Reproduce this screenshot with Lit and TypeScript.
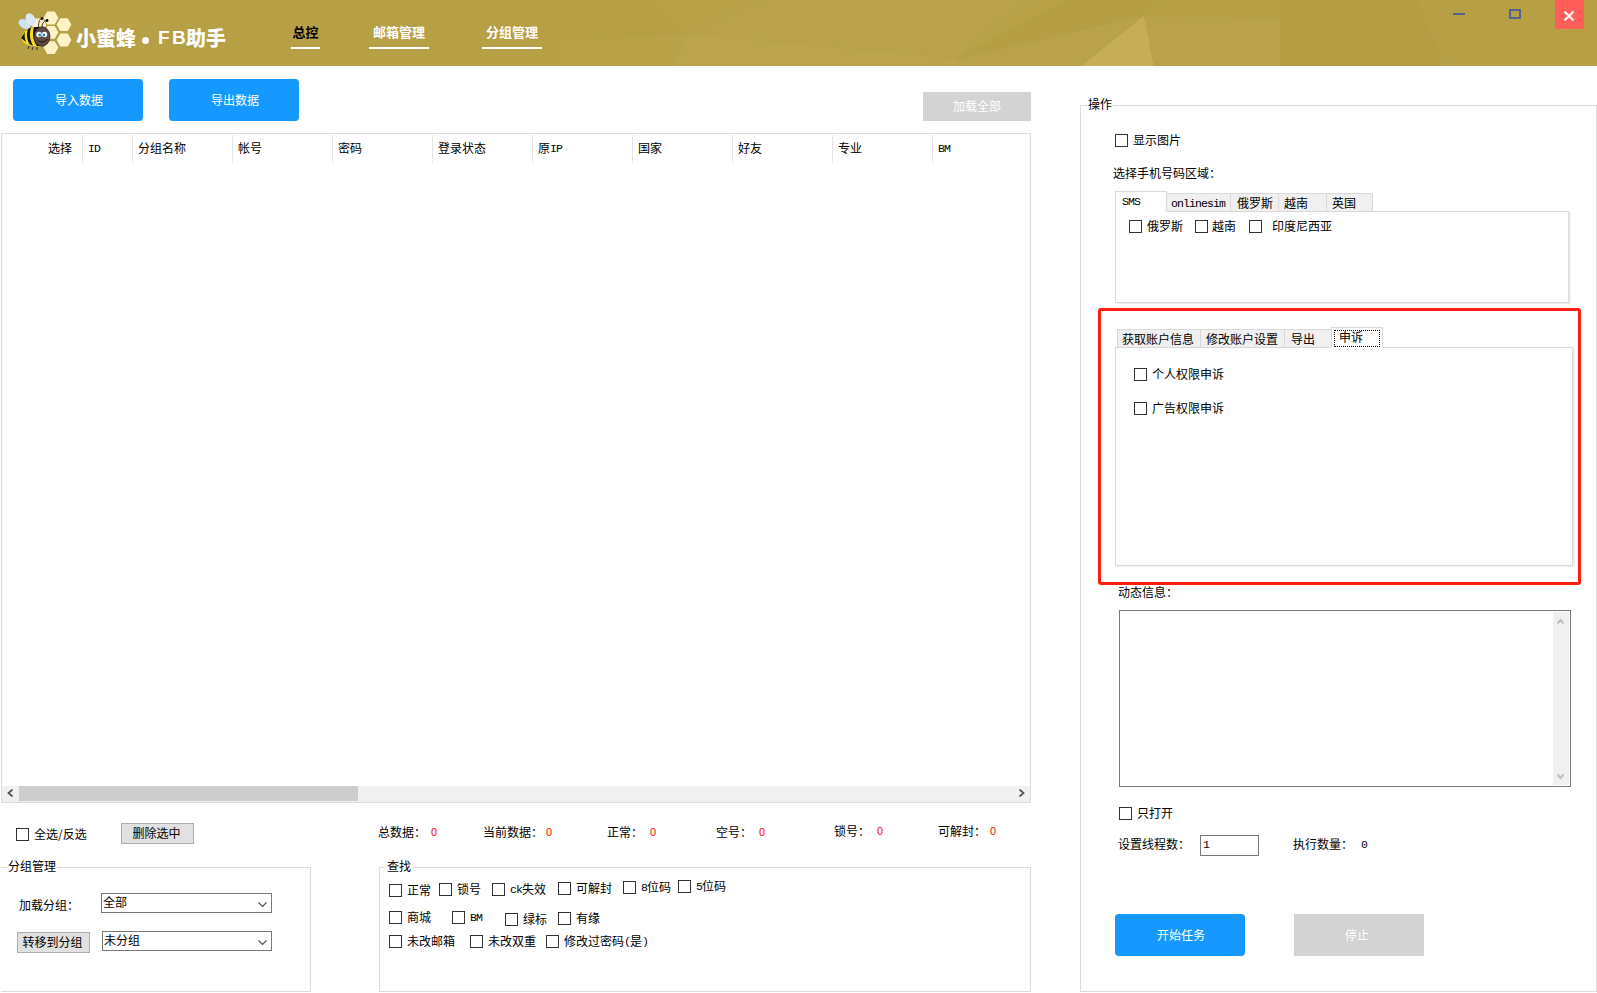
import { LitElement, html, css, svg } from "lit";
import { customElement } from "lit/decorators.js";

const lat = (t: string) => html`<span class="lat">${t}</span>`;

const check = (label: unknown, cls = "") =>
  html`<label class="check ${cls}"><i class="box"></i><span>${label}</span></label>`;

const stat = (label: string, cls: string) =>
  html`<div class="stat ${cls}"><span class="cap">${label}</span><span class="num">0</span></div>`;

const chevron = (d: string, w: number, h: number, cls: string) =>
  html`<svg class=${cls} width=${w} height=${h} viewBox="0 0 ${w} ${h}"><path d=${d} /></svg>`;

const hex = (cx: number, cy: number) =>
  svg`<path d="M${cx - 7.4} ${cy}l3.700-6.400h7.400l3.700 6.400-3.700 6.400h-7.400z" />`;

@customElement("app-root")
export class AppRoot extends LitElement {
  static styles = css`
    :host {
      display: flex;
      flex-direction: column;
      width: 1597px;
      height: 993px;
      overflow: hidden;
      background: #fff;
      color: #000;
      font: 12px/12px "Noto Sans CJK SC", sans-serif;
    }
    * { box-sizing: border-box; }
    span, div, label { white-space: nowrap; }
    svg { display: block; }
    .lat { display: inline-block; font: 11.5px/12px "Liberation Mono", monospace; letter-spacing: -0.9px; transform: translateY(-1px); }

    header {
      position: relative;
      display: flex;
      height: 66px;
      flex: none;
      background: #b69f45;
      color: #fff;
    }
    .facets { position: absolute; inset: 0; }
    .brand { position: relative; display: flex; width: 291px; padding: 10px 0 0 18px; }
    .name {
      margin: 18px 0 0 2px;
      font: 900 20px/20px "Noto Sans CJK SC", sans-serif;
      display: flex;
    }
    .name .dot { width: 7px; height: 7px; border-radius: 4px; background: #fff; margin: 9px 9px 0 6px; }
    .name .en { width: 28px; font: bold 19px/20px "Liberation Sans", sans-serif; letter-spacing: 2.5px; }
    nav { position: relative; display: flex; flex: 1; padding-top: 25px; font-size: 13px; line-height: 14px; font-weight: 600; }
    nav a { height: 24px; text-align: center; border-bottom: 2px solid #fff; }
    .n1 { width: 29px; color: #000; margin-right: 49px; }
    .n2 { width: 60px; margin-right: 53px; }
    .n3 { width: 60px; }
    .win { position: relative; display: flex; width: 144px; }
    .min { width: 12px; height: 2px; margin: 13px 44px 0 0; background: #53648c; }
    .max { width: 12px; height: 10px; margin: 9px 34px 0 0; border: 2px solid #53648c; }
    .close { width: 29px; height: 29px; background: #ff5f58; border-radius: 0 0 2px 2px; padding: 11px 0 0 9px; }
    .close path { stroke: #fff; stroke-width: 2; fill: none; }

    main { display: grid; grid-template-columns: 1080px 517px; height: 927px; }
    .left { display: flex; flex-direction: column; padding-left: 1px; }
    .tools { display: flex; height: 67px; padding: 13px 0 0 12px; }
    .btn {
      display: flex; align-items: center; justify-content: center;
      width: 130px; height: 42px; color: #fff; background: #1699ff; border-radius: 4px;
      padding: 0 0 1px 2px;
    }
    .btn.off { background: #d3d3d3; border-radius: 0; padding: 0 4px 1px 0; }
    .tools .btn + .btn { margin-left: 26px; }
    .tools .btn.load { width: 108px; height: 29px; margin: 13px 0 0 624px; padding: 0 0 1px; }

    .grid { display: flex; flex-direction: column; width: 1030px; height: 670px; border: 1px solid #dcdcdc; }
    .head { display: grid; grid-template-columns: 81px 50px repeat(8, 100px) 97px; height: 28px; margin-top: 1px; }
    .head div { padding: 7px 0 0 5px; border-right: 1px solid #e5e5e5; }
    .head div:first-child { padding-left: 46px; }
    .head div:last-child { border-right: 0; }
    .rows { flex: 1; }
    .hbar { display: flex; height: 16px; background: #f0f0f0; }
    .hbar .thumb { width: 339px; height: 15px; background: #cdcdcd; }
    .hbar .space { flex: 1; }
    .al, .ar { fill: none; stroke: #555; stroke-width: 1.8; }
    .al { margin: 3px 6px 0 5px; }
    .ar { margin: 3px 5px 0 0; }

    .check { display: flex; gap: 5px; height: 13px; line-height: 13px; }
    .check span { margin-top: -1px; }
    .box { width: 13px; height: 13px; flex: none; border: 1px solid #333; background: #fff; }
    .gbtn { display: flex; justify-content: center; width: 73px; height: 21px; line-height: 17px; padding-right: 2px; background: #e1e1e1; border: 1px solid #adadad; }

    .status { display: flex; height: 57px; }
    .status .all { margin: 25px 0 0 15px; width: 105px; }
    .status .gbtn { margin-top: 20px; }
    .stat { display: flex; margin-top: 23px; }
    .stat .num { color: #f00; font: 11px/13px "Liberation Sans", sans-serif; }
    .s1 { margin-left: 184px; width: 105px; } .s1 .cap { width: 53px; }
    .s2 { width: 124px; } .s2 .cap { width: 63px; }
    .s3 { width: 109px; } .s3 .cap { width: 43px; }
    .s4 { width: 118px; } .s4 .cap { width: 43px; }
    .s5 { width: 104px; margin-top: 22px; } .s5 .cap { width: 43px; }
    .s6 { margin-top: 22px; } .s6 .cap { width: 52px; }

    .groups { display: flex; height: 132px; }
    .group { border: 1px solid #dcdcdc; }
    .legend { display: block; width: max-content; line-height: 12px; background: #fff; margin: -8px 0 0 6px; padding: 0 1px 1px; }
    .mine { width: 310px; height: 125px; margin-top: 7px; border-left: 0; }
    .find { width: 652px; height: 125px; margin: 7px 0 0 68px; }
    .pair { display: flex; height: 22px; }
    .pair.p1 { margin: 20px 0 0 18px; }
    .pair.p2 { margin: 16px 0 0 16px; }
    .pair .cap { width: 82px; padding-top: 6px; }
    .pair .gbtn { margin: 1px 12px 0 0; }
    .sel { display: flex; justify-content: space-between; width: 171px; height: 20px; border: 1px solid #7a7a7a; padding: 2px 4px 0 1px; }
    .p2 .sel { width: 170px; }
    .dn { margin-top: 6px; fill: none; stroke: #555; stroke-width: 1.2; }

    .f { display: grid; height: 16px; margin-left: 9px; }
    .f1 { grid-template-columns: 50px 53px 66px 65px 55px 60px; margin-top: 7px; height: 18px; }
    .f2 { grid-template-columns: 63px 53px 53px 60px; margin-top: 13px; }
    .f3 { grid-template-columns: 81px 76px 100px; margin-top: 8px; }
    .d1 { margin-top: 1px; } .d2 { margin-top: 2px; } .d3 { margin-top: 3px; } .d4 { margin-top: 4px; }

    .panel { width: 517px; height: 887px; margin-top: 39px; }
    .inner { position: relative; display: flex; flex-direction: column; padding-left: 34px; }
    .show { margin-top: 23px; }
    .area { margin: 20px 0 0 -2px; }
    .tabs { display: flex; align-items: flex-end; position: relative; height: 20px; }
    .tab { height: 18px; border: 1px solid #d9d9d9; border-bottom: 0; border-left: 0; background: #f0f0f0; padding: 3px 0 0 6px; }
    .tab.on { height: 21px; margin-bottom: -1px; background: #fff; border-left: 1px solid #d9d9d9; padding-left: 6px; }
    .t1 { margin-top: 12px; }
    .w1 { width: 52px; } .w2 { width: 64px; } .w3 { width: 48px; } .w4 { width: 48px; } .w5 { width: 46px; }
    .tab.w4, .tab.w5 { padding-left: 5px; }
    .tab.w1 { padding-top: 3px; }
    .t2 { margin-top: 24px; padding-left: 2px; }
    .v1 { width: 84px; border-left: 1px solid #d9d9d9; } .v2 { width: 84px; } .v3 { width: 46px; border-right: 0; }
    .tab.v1 { padding-left: 4px; }
    .tab.v2 { padding-left: 5px; }
    .tab.v4 { width: 52px; padding: 2px; }
    .v4 .focus { display: block; width: 46px; height: 17px; border: 1px dotted #000; padding-left: 4px; line-height: 12px; }
    .tab.w2 { padding: 3px 0 0 4px; }
    .page { border: 1px solid #d9d9d9; box-shadow: 2px 1px 0 #f0f0f0; }
    .pg1 { display: flex; width: 454px; height: 92px; padding: 8px 0 0 13px; }
    .pg1 .c1 { width: 66px; } .pg1 .c2 { width: 54px; gap: 4px; } .pg1 .c3 { gap: 10px; }
    .pg2 { width: 458px; height: 219px; padding: 20px 0 0 18px; display: flex; flex-direction: column; gap: 21px; }
    .mark { position: absolute; left: 17px; top: 197px; width: 483px; height: 277px; border: 3px solid #ff1d12; border-radius: 3px; }
    .info { margin: 20px 0 0 3px; }
    .log { display: flex; justify-content: flex-end; width: 452px; height: 177px; margin: 12px 0 0 4px; padding: 1px; border: 1px solid #7a7a7a; }
    .vbar { display: flex; flex-direction: column; justify-content: space-between; align-items: center; width: 16px; background: #f0f0f0; padding: 6px 1px 5px 0; }
    .vb { fill: none; stroke: #bdbdbd; stroke-width: 2; }
    .only { margin: 20px 0 0 4px; }
    .threads { display: flex; height: 21px; margin: 15px 0 0 3px; }
    .threads .cap { width: 82px; padding-top: 3px; }
    .threads .inp { width: 59px; height: 21px; border: 1px solid #7a7a7a; padding: 2px 0 0 2px; }
    .threads .run { width: 68px; margin-left: 34px; padding-top: 3px; }
    .threads .zero { padding-top: 3px; }
    .acts { display: flex; gap: 49px; margin-top: 58px; }
  `;

  render() {
    const cols = ["选择", lat("ID"), "分组名称", "帐号", "密码", "登录状态", html`原${lat("IP")}`, "国家", "好友", "专业", lat("BM")];
    return html`
      <header>
        <svg class="facets" width="1597" height="66">
          <path fill="#b8a147" d="M655 0h109l-76 34z" />
          <path fill="#b8a147" d="M560 41l128-7-14 32H560z" />
          <path fill="#b9a249" d="M764 0h262l-69 59-269-25z" />
          <path fill="#bba44b" d="M688 34l269 25v7H674z" />
          <path fill="#b8a147" d="M1026 0h40L957 59z" />
          <path fill="#b59e44" d="M1066 0h100l-22 16-187 43z" />
          <path fill="#b9a249" d="M957 59l187-43-63 50H957z" />
          <path fill="#c5ae55" d="M1144 16l10 50h-73z" />
          <path fill="#b9a249" d="M1144 16l136 2v48h-126z" />
          <path fill="#b7a046" d="M1166 0h114v18l-136-2z" />
          <path fill="#b49d43" d="M1280 0h136l25 52-1 14h-160z" />
        </svg>
        <div class="brand">
          <svg width="56" height="46" viewBox="0 0 56 46">
            <g fill="#fff3c6">
              ${hex(33, 8)}${hex(46, 14.6)}${hex(33, 22.3)}${hex(46, 30)}${hex(33, 37.6)}${hex(21, 15)}
            </g>
            <ellipse cx="6.500" cy="14" rx="6.500" ry="4.300" fill="#cfe0f5" transform="rotate(30 6.500 14)" />
            <ellipse cx="12.500" cy="9.500" rx="6.500" ry="4.500" fill="#dbe8f8" transform="rotate(65 12.500 9.500)" />
            <path d="M3 28c2-8 9-11.500 20-11v19C11 37 5 34 3 28z" fill="#f6dc1c" />
            <path d="M3 28l4-6c-1 4 0 7 1 10zM10 19l3-1.500c-2 6-1 13 2 18l-3-1c-3-4-4-10-2-15.500z" fill="#16161c" />
            <path d="M16 17h6v19h-3c-4-5-5-13-3-19z" fill="#16161c" />
            <ellipse cx="24" cy="26.500" rx="8" ry="9.700" fill="#5f4a43" stroke="#2f2521" stroke-width=".8" />
            <path d="M20.500 17c0-5 1-8 3-8M24 17c0-4 2-6 4.500-6.500M11 36l-1 3M15 37l-1 3M19 37v3" fill="none" stroke="#2a2420" stroke-width=".9" />
            <circle cx="24" cy="8.500" r="1.300" /><circle cx="29" cy="10.500" r="1.400" />
            <circle cx="21" cy="24.500" r="2.700" fill="#fff" /><circle cx="26.500" cy="24.500" r="2.700" fill="#fff" />
            <circle cx="21.700" cy="25" r="1.400" fill="#2b7fb8" /><circle cx="26" cy="25" r="1.400" fill="#2b7fb8" />
            <path d="M19.500 30c3 3 7 3 9.500-1" fill="none" stroke="#1a1210" stroke-width="1" />
          </svg>
          <div class="name"><span>小蜜蜂</span><i class="dot"></i><span class="en">FB</span><span>助手</span></div>
        </div>
        <nav><a class="n1">总控</a><a class="n2">邮箱管理</a><a class="n3">分组管理</a></nav>
        <div class="win">
          <i class="min"></i><i class="max"></i>
          <div class="close"><svg width="11" height="10"><path d="M.5 .5l9 9M9.500 .5l-9 9" /></svg></div>
        </div>
      </header>
      <main>
        <section class="left">
          <div class="tools">
            <div class="btn">导入数据</div>
            <div class="btn">导出数据</div>
            <div class="btn off load">加载全部</div>
          </div>
          <div class="grid">
            <div class="head">${cols.map((c) => html`<div>${c}</div>`)}</div>
            <div class="rows"></div>
            <div class="hbar">
              ${chevron("M5.500 .5l-4 3.500 4 3.500", 6, 8, "al")}
              <div class="thumb"></div>
              <div class="space"></div>
              ${chevron("M.5 .5l4 3.500-4 3.500", 6, 8, "ar")}
            </div>
          </div>
          <div class="status">
            ${check("全选/反选", "all")}
            <div class="gbtn">删除选中</div>
            ${stat("总数据：", "s1")}${stat("当前数据：", "s2")}${stat("正常：", "s3")}
            ${stat("空号：", "s4")}${stat("锁号：", "s5")}${stat("可解封：", "s6")}
          </div>
          <div class="groups">
            <div class="group mine">
              <span class="legend">分组管理</span>
              <div class="pair p1">
                <span class="cap">加载分组：</span>
                <div class="sel"><span>全部</span>${chevron("M.5 .5l4 4 4-4", 9, 6, "dn")}</div>
              </div>
              <div class="pair p2">
                <div class="gbtn">转移到分组</div>
                <div class="sel"><span>未分组</span>${chevron("M.5 .5l4 4 4-4", 9, 6, "dn")}</div>
              </div>
            </div>
            <div class="group find">
              <span class="legend">查找</span>
              <div class="f f1">
                ${check("正常", "d4")}${check("锁号", "d3")}${check(html`${lat("ck")}失效`, "d3")}
                ${check("可解封", "d2")}${check(html`${lat("8")}位码`, "d1")}${check(html`${lat("5")}位码`)}
              </div>
              <div class="f f2">
                ${check("商城")}${check(lat("BM"))}${check("绿标", "d2")}${check("有缘", "d1")}
              </div>
              <div class="f f3">
                ${check("未改邮箱")}${check("未改双重")}${check(html`修改过密码${lat("(")}是${lat(")")}`)}
              </div>
            </div>
          </div>
        </section>
        <section class="group panel">
          <span class="legend">操作</span>
          <div class="inner">
            ${check("显示图片", "show")}
            <div class="area">选择手机号码区域：</div>
            <div class="tabs t1">
              <div class="tab on w1">${lat("SMS")}</div>
              <div class="tab w2">${lat("onlinesim")}</div>
              <div class="tab w3">俄罗斯</div>
              <div class="tab w4">越南</div>
              <div class="tab w5">英国</div>
            </div>
            <div class="page pg1">
              ${check("俄罗斯", "c1")}${check("越南", "c2")}${check("印度尼西亚", "c3")}
            </div>
            <div class="tabs t2">
              <div class="tab v1">获取账户信息</div>
              <div class="tab v2">修改账户设置</div>
              <div class="tab v3">导出</div>
              <div class="tab on v4"><span class="focus">申诉</span></div>
            </div>
            <div class="page pg2">${check("个人权限申诉")}${check("广告权限申诉")}</div>
            <div class="info">动态信息：</div>
            <div class="log">
              <div class="vbar">
                ${chevron("M.5 5.500l3-3.500 3 3.500", 7, 6, "vb")}
                ${chevron("M.5 .5l3 3.500 3-3.500", 7, 6, "vb")}
              </div>
            </div>
            ${check("只打开", "only")}
            <div class="threads">
              <span class="cap">设置线程数：</span>
              <div class="inp">${lat("1")}</div>
              <span class="run">执行数量：</span>
              <span class="zero">${lat("0")}</span>
            </div>
            <div class="acts"><div class="btn">开始任务</div><div class="btn off">停止</div></div>
            <div class="mark"></div>
          </div>
        </section>
      </main>
    `;
  }
}
